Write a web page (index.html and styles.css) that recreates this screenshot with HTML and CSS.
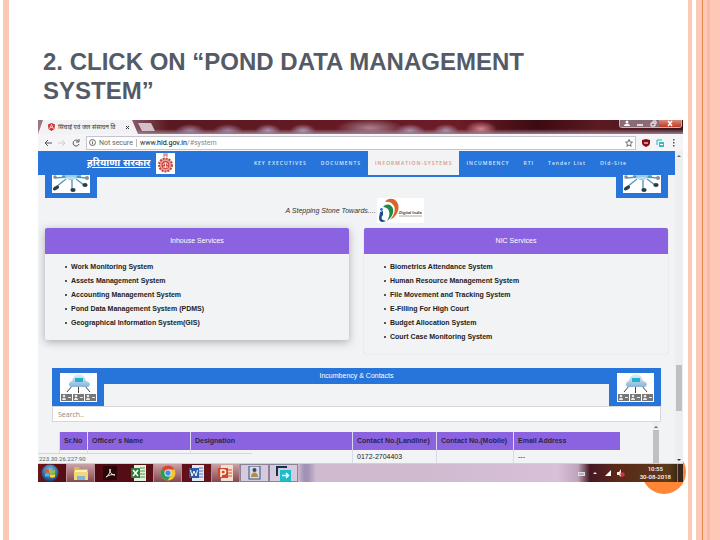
FILE: index.html
```html
<!DOCTYPE html>
<html lang="en">
<head>
<meta charset="utf-8">
<title>Pond Data Management System</title>
<link rel="stylesheet" href="styles.css">
</head>
<body>
<svg class="defs" aria-hidden="true">
  <defs>
    <linearGradient id="cloud" x1="0" y1="0" x2="0" y2="1"><stop offset="0" stop-color="#e6f1fa"/><stop offset="1" stop-color="#86b4d6"/></linearGradient>
    <radialGradient id="orb" cx=".5" cy=".35" r=".6"><stop offset="0" stop-color="#8cc4e4"/><stop offset="1" stop-color="#174a7c"/></radialGradient>
    <symbol id="hub" viewBox="0 0 38 18">
      <rect width="38" height="18" fill="#fff"/>
      <path d="M3 3l12-1M35 3L23 2M14 4L4 12M20 5v9M24 4l8 6M10 1h19" stroke="#4f9dbd" stroke-width="1.4" fill="none"/>
      <ellipse cx="19" cy="1" rx="6" ry="4" fill="#9ccbe6"/>
      <path d="M15 3h8" stroke="#d7edf8"/>
      <g fill="#2c3e48"><ellipse cx="4" cy="13" rx="3.4" ry="1.8" transform="rotate(-30 4 13)"/><ellipse cx="21" cy="15" rx="2.6" ry="2"/><ellipse cx="33" cy="10" rx="2.6" ry="2"/></g>
      <g fill="#8d8a92"><circle cx="3" cy="2" r="1.8"/><circle cx="35" cy="3" r="2"/></g>
    </symbol>
    <symbol id="people" viewBox="0 0 37 29">
      <rect width="37" height="29" fill="#fff"/>
      <path d="M12 13L7 19M18.500 13v7M25 13l5 6" stroke="#444" stroke-width="1"/>
      <path d="M12 14c-4 0-4-5 0-6 1-4 3-7 7-7s6 3 7 7c5 1 5 6 1 6z" fill="url(#cloud)"/>
      <rect x="15" y="5" width="8" height="4" fill="#22b2cf"/>
      <g fill="#777"><rect x="1" y="21" width="11" height="7"/><rect x="13" y="21" width="11" height="7"/><rect x="25" y="21" width="11" height="7"/></g>
      <g fill="#e8e8e8"><path d="M2 27c0-3 4-3 4 0z M14 27c0-3 4-3 4 0z M26 27c0-3 4-3 4 0z"/><circle cx="4" cy="23" r="1.300"/><circle cx="16" cy="23" r="1.300"/><circle cx="28" cy="23" r="1.300"/><path d="M8 24h3v1H8zM20 24h3v1h-3zM32 24h3v1h-3z"/></g>
    </symbol>
  </defs>
</svg>

<div class="edge edge-left"></div>
<main class="slide">
  <h1>2. CLICK ON “POND DATA MANAGEMENT SYSTEM”</h1>

  <div class="shot">
    <div class="disc"></div>
    <div class="desktop">
      <header class="titlebar">
        <div class="tab">
          <svg width="7" height="8" viewBox="0 0 14 16"><path d="M7 0l7 3-1 9-6 4-6-4L0 3z" fill="#d32f2f"/><path d="M3 12L7 3l4 9M5 9h4" stroke="#fff" stroke-width="1.500" fill="none"/></svg>
          <span class="tab-title" lang="hi">सिंचाई एवं जल संसाधन वि</span>
          <button class="plain" aria-label="Close tab"><svg width="5" height="5" viewBox="0 0 5 5"><path d="M1 1l3 3M4 1L1 4" stroke="#333"/></svg></button>
        </div>
        <button class="new-tab" aria-label="New tab"></button>
        <div class="window-buttons">
          <button aria-label="Profile"><svg width="12" height="7" viewBox="0 0 12 7"><circle cx="6" cy="2" r="1.500" fill="#fff"/><path d="M3 6c0-3 6-3 6 0z" fill="#fff"/></svg></button>
          <button aria-label="Minimize"><svg width="12" height="7" viewBox="0 0 12 7"><path d="M3 5h6" stroke="#fff" stroke-width="1.500"/></svg></button>
          <button aria-label="Restore"><svg width="12" height="7" viewBox="0 0 12 7"><path d="M4 3h4v3H4zM6 3V1h3v3" stroke="#fff" fill="none"/></svg></button>
          <button class="close" aria-label="Close"><svg width="12" height="7" viewBox="0 0 12 7"><path d="M4 1l4 5M8 1L4 6" stroke="#fff" stroke-width="1.500"/></svg></button>
        </div>
      </header>

      <div class="toolbar">
        <button class="plain" aria-label="Back"><svg width="8" height="8" viewBox="0 0 8 8"><path d="M8 4H1M4 1L1 4l3 3" stroke="#555" fill="none"/></svg></button>
        <button class="plain" aria-label="Forward"><svg width="8" height="8" viewBox="0 0 8 8"><path d="M0 4h7M4 1l3 3-3 3" stroke="#ccc" fill="none"/></svg></button>
        <button class="plain" aria-label="Reload"><svg width="8" height="8" viewBox="0 0 8 8"><path d="M7 5a3 3 0 1 1-1-3.300M7 0v3H4" stroke="#555" fill="none"/></svg></button>
        <div class="address">
          <svg width="7" height="7" viewBox="0 0 8 8"><circle cx="4" cy="4" r="3.400" stroke="#555" fill="none"/><path d="M4 3.500V6M4 2v1" stroke="#555"/></svg>
          <span class="secure">Not secure</span>
          <span class="url">www.<b>hid.gov.in</b><span class="path">/#system</span></span>
          <svg class="star" width="8" height="8" viewBox="0 0 16 16"><path d="M8 1l2 5 5 .400-4 3.400 1.400 5L8 12l-4.400 2.800L5 9.800 1 6.400 6 6z" stroke="#444" stroke-width="1.500" fill="none"/></svg>
        </div>
        <svg width="8" height="8" viewBox="0 0 8 8"><path d="M0 1l4-1 4 1v3c0 2-2 3-4 4-2-1-4-2-4-4z" fill="#8b0d16"/><path d="M2 4h4" stroke="#e5b8bb" stroke-width="1.500"/></svg>
        <svg width="8" height="8" viewBox="0 0 8 8"><path d="M6 1H1v5" stroke="#29afb8" fill="none"/><rect x="3" y="3" width="5" height="5" fill="#27c0cf"/><path d="M4 5.500h3" stroke="#fff"/></svg>
        <svg width="8" height="8" viewBox="0 0 8 8"><path d="M3 0h1.500v1.500H3zM3 3h1.500v1.500H3zM3 6h1.500v1.500H3z" fill="#555"/></svg>
      </div>

      <div class="viewport">
        <div class="page">
          <nav>
            <a class="brand" href="#home" lang="hi">हरियाणा सरकार</a>
            <svg class="emblem" width="19" height="21" viewBox="0 0 19 21"><rect width="19" height="21" fill="#fff"/><circle cx="9.500" cy="12" r="6.500" fill="#e9a09b" stroke="#c1443f" stroke-width="2" stroke-dasharray="2 1"/><circle cx="9.500" cy="12" r="4" fill="#c94a44"/><path d="M7 12c1-3 4-3 5 0M9.500 10v5M7 14h5" stroke="#fbe3e0" fill="none"/><path d="M8 4V2h3v2M7 1h5" stroke="#d06560" fill="none"/></svg>
            <ul>
              <li><a href="#executives">KEY EXECUTIVES</a></li>
              <li><a href="#documents">DOCUMENTS</a></li>
              <li><a class="active" href="#system">INFORMATION-SYSTEMS</a></li>
              <li><a href="#incumbency">INCUMBENCY</a></li>
              <li><a href="#rti">RTI</a></li>
              <li><a href="#tenders">Tender List</a></li>
              <li><a href="#old">Old-Site</a></li>
            </ul>
          </nav>

          <section class="services" id="system">
            <div class="strip">
              <div class="corner corner-cut"><svg width="38" height="18"><use href="#hub"/></svg></div>
              <div class="strip-line"></div>
              <div class="corner corner-cut"><svg width="38" height="18"><use href="#hub"/></svg></div>
            </div>
            <p class="tagline"><i>A Stepping Stone Towards....</i>
              <svg width="47" height="25" viewBox="0 0 47 25"><rect width="47" height="25" fill="#fff"/><path d="M8 4C11-1 19 0 21 6c2 7-2 13-8 16 4-5 6-10 4-14-2-4-6-5-9-4z" fill="#d9642c"/><path d="M6 9c3-4 9-3 10 2s-2 9-6 12c2-4 3-7 2-10s-4-4-6-4z" fill="#1f8a43"/><path d="M3 14l3-1v4c-2 2-2 4 0 5l3 1c-4 2-7 1-7-3 0-2 1-4 1-6z" fill="#1c4f92"/><circle cx="4.500" cy="11.500" r="1.400" fill="#1c7fb8"/><text x="22" y="16" class="logo-text">Digital India</text><path d="M22 18h23" stroke="#999" stroke-width=".8"/></svg>
            </p>
            <div class="cards">
              <article class="card raised">
                <h2>Inhouse Services</h2>
                <ul>
                  <li>Work Monitoring System</li>
                  <li>Assets Management System</li>
                  <li>Accounting Management System</li>
                  <li>Pond Data Management System (PDMS)</li>
                  <li>Geographical Information System(GIS)</li>
                </ul>
              </article>
              <article class="card">
                <h2>NIC Services</h2>
                <ul>
                  <li>Biometrics Attendance System</li>
                  <li>Human Resource Management System</li>
                  <li>File Movement and Tracking System</li>
                  <li>E-Filling For High Court</li>
                  <li>Budget Allocation System</li>
                  <li>Court Case Monitoring System</li>
                </ul>
              </article>
            </div>
          </section>

          <section class="contacts" id="incumbency">
            <div class="strip">
              <div class="corner"><svg width="37" height="29"><use href="#people"/></svg></div>
              <h2>Incumbency &amp; Contacts</h2>
              <div class="corner"><svg width="37" height="29"><use href="#people"/></svg></div>
            </div>
            <input class="search" type="text" placeholder="Search.." aria-label="Search contacts">
            <div class="listing">
              <table>
                <colgroup><col class="c-no"><col class="c-name"><col class="c-post"><col class="c-land"><col class="c-mob"><col></colgroup>
                <thead><tr><th>Sr.No</th><th>Officer' s Name</th><th>Designation</th><th>Contact No.(Landline)</th><th>Contact No.(Mobile)</th><th>Email Address</th></tr></thead>
                <tbody><tr><td></td><td></td><td></td><td>0172-2704403</td><td></td><td>---</td></tr></tbody>
              </table>
              <div class="inner-scroll"><span class="up"></span><span class="thumb"></span></div>
            </div>
          </section>
        </div>
        <div class="scroll"><span class="up"></span><span class="thumb"></span><span class="down"></span></div>
        <div class="status">223.30.26.227:90</div>
      </div>

      <footer class="taskbar">
        <button class="start" aria-label="Start"><svg width="18" height="18" viewBox="0 0 18 18"><circle cx="9" cy="9" r="8.500" fill="url(#orb)"/><path d="M4 6c2-1 3-1 4 0v3c-1-1-3-1-4 0z" fill="#e8572a"/><path d="M9 6c1 1 3 1 5 0v3c-2 1-4 1-5 0z" fill="#8fc442"/><path d="M4 10c1-1 3-1 4 0v3c-1-1-3-1-4 0z" fill="#55b4e8"/><path d="M9 10c1 1 3 1 5 0v3c-2 1-4 1-5 0z" fill="#fbd13d"/></svg></button>
        <button class="lit" aria-label="Explorer"><svg width="16" height="16" viewBox="0 0 16 16"><path d="M1 2h5l1 2h8v11H1z" fill="#e2b84e"/><path d="M2 5h12v5H2z" fill="#fff3b8"/><path d="M1 7h14v8H1z" fill="#f4d878"/><path d="M4 15v-4h8v4" fill="#7fb7d8"/></svg></button>
        <button aria-label="Acrobat"><svg width="14" height="14" viewBox="0 0 14 14"><rect width="14" height="14" fill="#2b0608"/><path d="M3 11c3-2 5-6 4-8-1 3 2 6 5 6-3-1-6 0-9 2z" stroke="#eee" fill="none"/></svg></button>
        <button aria-label="Excel"><svg width="16" height="16" viewBox="0 0 16 16"><path d="M3 0h12v16H3z" fill="#e5efdf"/><path d="M9 3h5M9 6h5M9 9h5M9 12h5" stroke="#4a9a4d"/><rect y="3" width="9" height="10" fill="#2f7d3a"/><path d="M2 5l5 6M7 5l-5 6" stroke="#fff" stroke-width="1.500"/></svg></button>
        <button class="lit" aria-label="Chrome"><svg width="16" height="16" viewBox="0 0 16 16"><circle cx="8" cy="8" r="7.500" fill="#f5c52c"/><path d="M8 8L1.500 4.200A7.500 7.500 0 0 1 14.500 4.500H8z" fill="#dc4437"/><path d="M8 8L1.500 4.200A7.500 7.500 0 0 0 7.500 15.500L11 10z" fill="#2d9b55"/><circle cx="8" cy="8" r="3.500" fill="#fff"/><circle cx="8" cy="8" r="2.700" fill="#4788e8"/></svg></button>
        <button aria-label="Word"><svg width="16" height="16" viewBox="0 0 16 16"><path d="M3 0h12v16H3z" fill="#dfe8f4"/><path d="M10 3h4M10 6h4M10 9h4M10 12h4" stroke="#4c78b8"/><rect y="3" width="10" height="10" fill="#2c5ba3"/><path d="M1.500 5L3 11l2-5 2 5 1.500-6" stroke="#fff" fill="none"/></svg></button>
        <button class="lit" aria-label="PowerPoint"><svg width="16" height="16" viewBox="0 0 16 16"><path d="M3 0h12v16H3z" fill="#f7ddd0"/><path d="M10 5h4M10 8h4M10 11h4" stroke="#d8552e"/><rect y="3" width="10" height="10" fill="#d04a26"/><path d="M3 12V5h3c2 0 2 4 0 4H3" stroke="#fff" stroke-width="1.500" fill="none"/></svg></button>
        <button class="open" aria-label="Remote session"><svg width="14" height="14" viewBox="0 0 14 14"><rect x="1" width="11" height="13" fill="#d4dbe8" stroke="#34507c"/><circle cx="6.500" cy="4" r="2" fill="#46464e"/><path d="M3 11c0-6 7-6 7 0z" fill="#b68b42"/></svg></button>
        <button class="open" aria-label="Transfer"><svg width="15" height="15" viewBox="0 0 15 15"><path d="M1 10V1h10" stroke="#12354f" stroke-width="2" fill="none"/><rect x="4" y="4" width="11" height="11" fill="#1dbccb"/><path d="M6 9.500h6M10 7l2.500 2.500L10 12" stroke="#fff" stroke-width="1.500" fill="none"/></svg></button>
        <div class="tray">
          <svg width="8" height="8" viewBox="0 0 8 8"><path d="M0 3h7v4H0z" fill="#ddd"/><path d="M3 3c0-2 3 0 4-2M1 5h5" stroke="#777" stroke-width=".8" fill="none"/></svg>
          <svg width="8" height="8" viewBox="0 0 8 8"><path d="M2 5l2-2 2 2z" fill="#eee"/></svg>
          <svg width="8" height="8" viewBox="0 0 8 8"><path d="M1 7L7 1v6z" fill="#fff"/></svg>
          <svg width="8" height="8" viewBox="0 0 8 8"><path d="M0 3h2l2-3v8L2 6H0z" fill="#eee"/><circle cx="5.500" cy="5.500" r="2.200" fill="#d8343d"/></svg>
          <time>10:55<br>30-08-2018</time>
          <span class="peek"></span>
        </div>
      </footer>
    </div>
  </div>
</main>
<div class="edge edge-thin"></div>
<div class="edge edge-wide"></div>
</body>
</html>
```
FILE: styles.css
```css
* { box-sizing: border-box; }

body {
  margin: 0;
  min-height: 100vh;
  display: flex;
  background: #fff;
  font-family: "Liberation Sans", "Noto Sans", sans-serif;
  overflow: hidden;
}

ul, p, h1, h2 { margin: 0; padding: 0; list-style: none; }
svg { display: block; flex: none; }
button { border: 0; padding: 0; background: none; display: flex; align-items: center; justify-content: center; }
.defs { position: absolute; width: 0; height: 0; }

/* slide */
.edge { flex: none; background: #fdc8b5; }
.edge-left { width: 6px; margin-left: 3px; }
.edge-thin { width: 4px; margin-right: 4px; }
.edge-wide { width: 24px; background: linear-gradient(90deg, #fdc8b5 6px, #e58a52 6px 7px, #fdc8b5 7px 11px, #fbb8a2 11px 14px, #fdc8b5 14px); }
.slide { flex: 1; min-width: 0; padding: 47px 5px 0 29px; }
h1 { padding: 0 90px 0 5px; font-size: 24px; line-height: 29px; color: #555b66; }
.shot { position: relative; margin-top: 15px; }
.disc { position: absolute; right: -3px; bottom: -12px; width: 44px; height: 44px; border-radius: 50%; background: #ff8537; }
.desktop { position: relative; background: #f1f3f5; overflow: hidden; }

/* browser frame */
.titlebar {
  height: 14px;
  display: flex;
  align-items: flex-end;
  background:
    linear-gradient(180deg, transparent 9px, #9a8090 14px),
    radial-gradient(ellipse 13px 7px at 230px 11px, #b9a0c4, transparent),
    radial-gradient(ellipse 13px 7px at 265px 11px, #b9a0c4, transparent),
    radial-gradient(ellipse 34px 9px at 332px 8px, #a98193, transparent),
    radial-gradient(ellipse 15px 7px at 372px 11px, #b59aba, transparent),
    radial-gradient(ellipse 13px 7px at 408px 11px, #b59aba, transparent),
    radial-gradient(ellipse 16px 8px at 443px 9px, #d88490, transparent),
    radial-gradient(ellipse 15px 7px at 152px 11px, #a88aa8, transparent),
    radial-gradient(ellipse 15px 7px at 190px 11px, #a88aa8, transparent),
    linear-gradient(90deg, #9c7583 0 80px, #5a1820 130px, #6d1c26 420px, #3c0a10 500px, #5c1a22 560px, #3b1217);
}
.tab {
  display: flex;
  align-items: center;
  gap: 3px;
  width: 100px;
  height: 14px;
  padding: 0 8px 0 10px;
  background: #f2f2f4;
  clip-path: polygon(5px 0, 94px 0, 100px 100%, 0 100%);
}
.tab-title { flex: 1; white-space: nowrap; font-size: 6px; line-height: 12px; color: #333; }
.new-tab { width: 17px; height: 8px; margin-bottom: 3px; background: #d2c2c8; clip-path: polygon(0 0, 13px 0, 100% 100%, 4px 100%); }
.window-buttons { display: flex; align-self: flex-start; margin-left: auto; margin-right: 1px; border: 1px solid #c9b4ba; border-top: 0; border-radius: 0 0 3px 3px; overflow: hidden; }
.window-buttons button { width: 13px; height: 7px; background: #8a6d74; }
.window-buttons .close { width: 22px; background: linear-gradient(#d88a78, #c03a24); }
.toolbar { height: 17px; display: flex; align-items: center; gap: 6px; padding: 0 5px 0 6px; background: #f5f5f7; }
.address { flex: 1; display: flex; align-items: center; gap: 3px; height: 14px; padding: 0 2px; border: 1px solid #c5c5cf; background: #fff; font: 7px/12px Roboto, sans-serif; color: #333; }
.secure { padding-right: 3px; border-right: 1px solid #bbb; line-height: 8px; color: #666; }
.url b { font-weight: 400; color: #000; }
.path { color: #888; }
.star { margin-left: auto; }

/* web page */
.viewport { position: relative; display: flex; border-bottom: 1px solid #d5cdd5; }
.page { flex: 1; min-width: 0; }
nav { height: 24px; display: flex; align-items: center; padding-left: 49px; background: #2775da; }
.brand { width: 62px; font-size: 10px; line-height: 14px; font-weight: 700; color: #fff; white-space: nowrap; }
.emblem { margin-left: 7px; }
nav ul { display: flex; height: 24px; margin-left: auto; margin-right: 41px; }
nav li a { display: flex; align-items: center; height: 24px; padding: 0 7px; font-family: "Open Sans", sans-serif; font-size: 5px; font-weight: 600; letter-spacing: 1px; color: #dceafb; text-decoration: none; white-space: nowrap; }
nav li .active { background: #f1f3f5; color: #e0917b; }

.services { padding: 0 7px; }
.strip { display: flex; }
.strip-line { flex: 1; border-top: 2px solid #2775da; }
.corner { display: flex; justify-content: center; width: 52px; height: 38px; padding-top: 5px; background: #2775da; }
.corner-cut { height: 23px; padding-top: 0; }
.tagline { display: flex; justify-content: center; align-items: center; gap: 1px; padding-right: 4px; font-size: 7px; color: #333; }
.logo-text { font: italic 700 4px "Liberation Sans", sans-serif; fill: #444; }
.cards { display: grid; grid-template-columns: 1fr 1fr; align-items: start; gap: 15px; margin-top: 5px; }
.card { border-radius: 2px; box-shadow: 0 0 1px #bbb; }
.raised { box-shadow: 0 2px 9px #aaacb0; background: #f1f3f5; }
.card h2 { border-radius: 2px 2px 0 0; background: #8b63e0; color: #fff; font-size: 7px; line-height: 26px; font-weight: 400; text-align: center; }
.card ul { padding: 6px 0 10px 26px; }
.card li { position: relative; font-size: 7px; line-height: 14px; font-weight: 700; color: #222; }
.card li::before { content: ""; position: absolute; left: -6px; top: 6px; width: 2px; height: 2px; border-radius: 50%; background: #222; }

.contacts { padding: 14px 14px 0; }
.contacts h2 { flex: 1; height: 16px; background: #2775da; color: #fff; font-size: 7px; line-height: 16px; font-weight: 400; text-align: center; }
.search { display: block; width: 100%; height: 16px; padding: 0 5px; border: 1px solid #d5d7da; background: #fff; font: 7px "Open Sans", sans-serif; }
.search::placeholder { color: #888; }
.listing { display: flex; padding: 0 2px 0 7px; }
table { flex: 1; margin: 10px 33px 0 0; border-collapse: collapse; table-layout: fixed; width: 100%; font-size: 7px; line-height: 12px; }
th, td { padding: 0 4px; border-left: 1px solid #d9d9ea; text-align: left; white-space: nowrap; }
th { height: 18px; background: #8b63e0; color: #2d2548; }
td { height: 13px; color: #222; }
.c-no { width: 28px; }
.c-name { width: 103px; }
.c-post { width: 162px; }
.c-land { width: 84px; }
.c-mob { width: 77px; }

.inner-scroll, .scroll { display: flex; flex-direction: column; align-items: center; background: #eceef0; }
.inner-scroll { width: 6px; padding-top: 4px; }
.inner-scroll .thumb { flex: 1; width: 6px; margin-top: 2px; background: #bfc0c2; }
.scroll { width: 8px; padding: 4px 0 2px; }
.scroll .thumb { width: 6px; height: 46px; margin-top: 208px; background: #bfc0c2; }
.up { border: 2px solid transparent; border-top: 0; border-bottom-color: #666; }
.down { margin-top: auto; border: 2px solid transparent; border-bottom: 0; border-top-color: #333; }
.status { position: absolute; left: 0; bottom: 0; width: 214px; height: 10px; padding-left: 1px; border-top: 1px solid #d5d7da; background: #f1f3f5; font: 6px/9px Roboto, sans-serif; color: #666; }

/* taskbar */
.taskbar {
  display: flex;
  height: 18px;
  background: linear-gradient(90deg, #6b141b 0, #4a0a10 40px, #6b141b 195px, #b295a5 202px, #cdb9d0 260px, #a292b4 266px 270px, #cfbad0 278px 380px, #d8c0d8 520px, #bfa4bc 540px, #461722 552px, #5b2818 580px, #5a3a1c 630px, #2e1c14);
}
.taskbar button { width: 29px; height: 18px; }
.taskbar .start { width: 28px; padding-right: 4px; }
.taskbar .lit { background: linear-gradient(#c9a3a8, #86484f); border-left: 1px solid #b98d92; border-right: 1px solid #b98d92; }
.taskbar .open { background: #d5cbdc; border: 1px solid #8f8298; }
.tray { display: flex; align-items: center; gap: 5px; margin-left: auto; }
.tray time { margin: 0 1px 0 10px; font: 500 6px/8px Roboto, sans-serif; color: #fff; text-align: center; }
.peek { width: 6px; height: 18px; border-left: 1px solid #8c7a68; background: #38241c; }
```
